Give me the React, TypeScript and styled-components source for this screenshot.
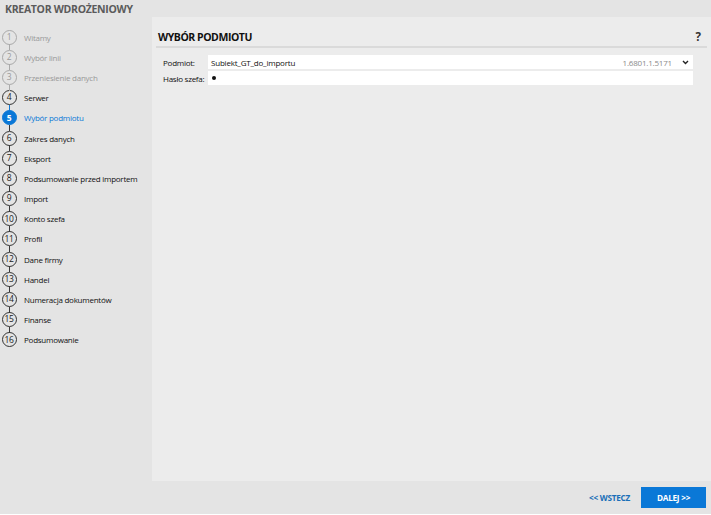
import React from "react";
import styled, { createGlobalStyle, css } from "styled-components";

const GlobalStyle = createGlobalStyle`
  html, body { margin: 0; padding: 0; }
  body {
    background: #e4e4e4;
    font-family: "Open Sans", "Noto Sans", sans-serif;
    color: #111;
  }
`;

const Window = styled.div`
  width: 711px;
  height: 515px;
  display: flex;
  flex-direction: column;
  background: #e4e4e4;
  overflow: hidden;
`;

const TitleBar = styled.div`
  height: 17px;
  flex: none;
  padding-left: 5px;
  display: flex;
  align-items: center;
  font-size: 10.5px;
  font-weight: 700;
  color: #5b5b5b;
  letter-spacing: -0.3px;
`;

const Main = styled.div`
  flex: 1;
  display: flex;
  min-height: 0;
`;

const Sidebar = styled.nav`
  width: 152px;
  flex: none;
  padding-top: 10px;
  display: flex;
  flex-direction: column;
`;

type StepState = "done" | "active" | "todo";

const Step = styled.div`
  height: 20.2px;
  display: flex;
  align-items: center;
  gap: 6px;
`;

const Marker = styled.div<{ $line?: StepState | null }>`
  position: relative;
  width: 18px;
  height: 100%;
  display: flex;
  align-items: center;
  justify-content: center;
  ${(p) =>
    p.$line &&
    css`
      &::before {
        content: "";
        position: absolute;
        left: 8.5px;
        top: -3px;
        height: 6px;
        width: 1px;
        background: ${p.$line === "done" ? "#a9a9a9" : p.$line === "active" ? "#0a78d7" : "#3a3a3a"};
      }
    `}
`;

const Circle = styled.span<{ $state: StepState }>`
  box-sizing: border-box;
  width: 15px;
  height: 15px;
  border-radius: 50%;
  display: flex;
  align-items: center;
  justify-content: center;
  font-size: 8.5px;
  line-height: 1;
  letter-spacing: -0.4px;
  ${(p) =>
    p.$state === "done"
      ? css`
          border: 1.3px solid #a9a9a9;
          color: #9a9a9a;
        `
      : p.$state === "active"
      ? css`
          background: #0a78d7;
          border: 1.3px solid #0a78d7;
          color: #fff;
          font-weight: 700;
        `
      : css`
          border: 1.3px solid #333;
          color: #1a1a1a;
        `}
`;

const StepLabel = styled.span<{ $state: StepState }>`
  font-size: 8px;
  font-weight: 500;
  letter-spacing: -0.25px;
  white-space: nowrap;
  color: ${(p) => (p.$state === "done" ? "#999" : p.$state === "active" ? "#0a78d7" : "#111")};
`;

const Panel = styled.section`
  flex: 1;
  background: #ececec;
  display: flex;
  flex-direction: column;
`;

const PanelHeader = styled.header`
  margin: 0 4px;
  padding: 12px 2px 2px 2px;
  display: flex;
  align-items: center;
  justify-content: space-between;
  border-bottom: 2px solid #dadada;
`;

const Heading = styled.h1`
  margin: 0;
  font-size: 10.5px;
  font-weight: 700;
  color: #111;
  letter-spacing: -0.45px;
`;

const Help = styled.span`
  font-size: 11.5px;
  font-weight: 700;
  color: #333;
  margin-right: 4px;
`;

const Form = styled.div`
  padding: 7px 18px 0 11px;
  display: grid;
  grid-template-columns: 45px 1fr;
  row-gap: 2px;
  align-items: center;
`;

const FieldLabel = styled.label`
  font-size: 8px;
  font-weight: 500;
  letter-spacing: -0.25px;
  color: #111;
  white-space: nowrap;
`;

const Field = styled.div`
  height: 14px;
  background: #fff;
  display: flex;
  align-items: center;
  padding: 0 4px 0 3px;
  font-size: 8px;
  font-weight: 500;
  letter-spacing: -0.2px;
  color: #111;
`;

const FieldValue = styled.span`
  flex: 1;
`;

const Version = styled.span`
  color: #8a8a8a;
  margin-right: 10px;
`;

const Dot = styled.span`
  width: 4px;
  height: 4px;
  border-radius: 50%;
  background: #111;
  margin-left: 1px;
`;

const Footer = styled.footer`
  height: 33px;
  flex: none;
  display: flex;
  align-items: center;
  justify-content: flex-end;
  gap: 11px;
  padding-right: 5px;
  border-bottom: 1px solid #fff;
`;

const BackButton = styled.button`
  border: none;
  background: transparent;
  font-family: inherit;
  font-size: 8.2px;
  font-weight: 700;
  color: #1a6fb8;
  padding: 0;
  cursor: pointer;
  letter-spacing: -0.25px;
`;

const NextButton = styled.button`
  border: none;
  width: 65px;
  height: 21px;
  background: #0a78d7;
  color: #fff;
  font-family: inherit;
  font-size: 8.2px;
  font-weight: 700;
  cursor: pointer;
  letter-spacing: -0.25px;
`;

const steps = [
  "Witamy",
  "Wybór linii",
  "Przeniesienie danych",
  "Serwer",
  "Wybór podmiotu",
  "Zakres danych",
  "Eksport",
  "Podsumowanie przed importem",
  "Import",
  "Konto szefa",
  "Profil",
  "Dane firmy",
  "Handel",
  "Numeracja dokumentów",
  "Finanse",
  "Podsumowanie",
];

const ACTIVE = 4;

const stateOf = (i: number): StepState => (i < 3 ? "done" : i === ACTIVE ? "active" : "todo");

const lineOf = (i: number): StepState | null => {
  if (i === 0) return null;
  if (i <= 3) return "done";
  if (i === ACTIVE) return "active";
  return "todo";
};

const ChevronDown = () => (
  <svg width="7" height="5" viewBox="0 0 7 5" aria-hidden>
    <path d="M1 1 L3.5 3.5 L6 1" fill="none" stroke="#222" strokeWidth="1.4" />
  </svg>
);

export default function App() {
  return (
    <>
      <GlobalStyle />
      <Window>
        <TitleBar>KREATOR WDROŻENIOWY</TitleBar>
        <Main>
          <Sidebar>
            {steps.map((s, i) => {
              const st = stateOf(i);
              return (
                <Step key={s}>
                  <Marker $line={lineOf(i)}>
                    <Circle $state={st}>{i + 1}</Circle>
                  </Marker>
                  <StepLabel $state={st}>{s}</StepLabel>
                </Step>
              );
            })}
          </Sidebar>
          <Panel>
            <PanelHeader>
              <Heading>WYBÓR PODMIOTU</Heading>
              <Help>?</Help>
            </PanelHeader>
            <Form>
              <FieldLabel>Podmiot:</FieldLabel>
              <Field>
                <FieldValue>Subiekt_GT_do_importu</FieldValue>
                <Version>1.6801.1.5171</Version>
                <ChevronDown />
              </Field>
              <FieldLabel>Hasło szefa:</FieldLabel>
              <Field>
                <Dot />
              </Field>
            </Form>
          </Panel>
        </Main>
        <Footer>
          <BackButton>&lt;&lt; WSTECZ</BackButton>
          <NextButton>DALEJ &gt;&gt;</NextButton>
        </Footer>
      </Window>
    </>
  );
}
